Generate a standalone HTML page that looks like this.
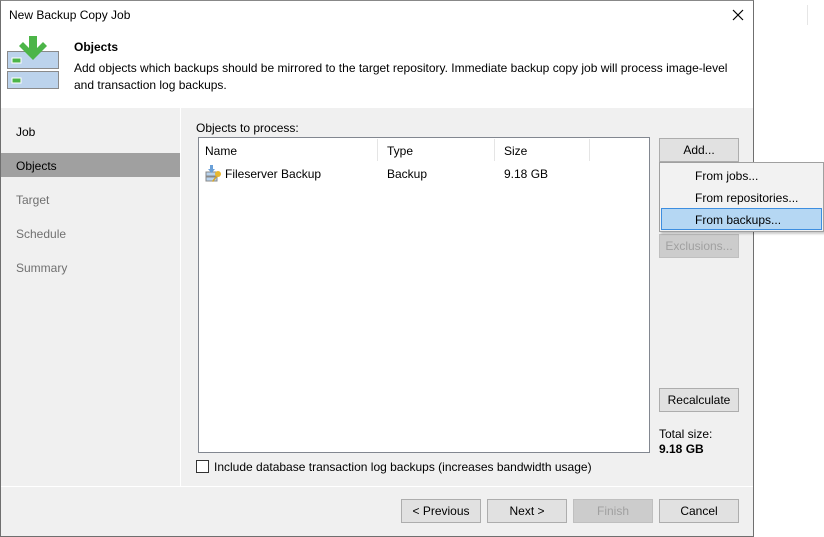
<!DOCTYPE html>
<html><head><style>
*{margin:0;padding:0;box-sizing:border-box}
body{width:824px;height:537px;background:#fff;font-family:"Liberation Sans",sans-serif;font-size:12px;color:#000;position:relative;overflow:hidden}
.a{position:absolute}
.btn{position:absolute;background:#e1e1e1;border:1px solid #adadad;text-align:center;line-height:22px;height:24px}
.dis{color:#a0a0a0;background:#cccccc;border-color:#bfbfbf}
</style></head><body>
<div class="a" style="left:0;top:0;width:754px;height:537px;border:1px solid #6f6f6f;border-top:1px solid #888;background:#f0f0f0"></div>
<div class="a" style="left:1px;top:1px;width:752px;height:107px;background:#fff"></div>
<div class="a" style="left:807px;top:5px;width:1px;height:20px;background:#e6e6e6"></div>
<div class="a" style="left:9px;top:8px;">New Backup Copy Job</div>
<svg class="a" style="left:732px;top:9px" width="12" height="12"><path d="M1 1L11 11M11 1L1 11" stroke="#000" stroke-width="1.2"/></svg>
<svg class="a" style="left:6px;top:36px" width="56" height="56">
<rect x="1.5" y="15.5" width="51" height="17" fill="#bcd3ec" stroke="#8a8a8a"/>
<rect x="1.5" y="35.5" width="51" height="17" fill="#bcd3ec" stroke="#8a8a8a"/>
<rect x="6" y="22" width="9" height="5" fill="#4cb548" stroke="#fff"/>
<rect x="6" y="42" width="9" height="5" fill="#4cb548" stroke="#fff"/>
<path d="M23 0h8v12l6-6 4 4-14 14-14-14 4-4 6 6z" fill="#4cb548"/>
</svg>
<div class="a" style="left:74px;top:40px;font-weight:bold">Objects</div>
<div class="a" style="left:74px;top:60px;line-height:17px;width:680px">Add objects which backups should be mirrored to the target repository. Immediate backup copy job will process image-level<br>and transaction log backups.</div>
<div class="a" style="left:180px;top:108px;width:1px;height:378px;background:#fff"></div>
<div class="a" style="left:1px;top:486px;width:752px;height:1px;background:#fff"></div>
<div class="a" style="left:16px;top:125px">Job</div>
<div class="a" style="left:1px;top:153px;width:179px;height:24px;background:#a0a0a0"></div>
<div class="a" style="left:16px;top:159px">Objects</div>
<div class="a" style="left:16px;top:193px;color:#707070">Target</div>
<div class="a" style="left:16px;top:227px;color:#707070">Schedule</div>
<div class="a" style="left:16px;top:261px;color:#707070">Summary</div>
<div class="a" style="left:196px;top:121px">Objects to process:</div>
<div class="a" style="left:198px;top:137px;width:452px;height:316px;background:#fff;border:1px solid #828790"></div>
<div class="a" style="left:377px;top:139px;width:1px;height:22px;background:#e5e5e5"></div>
<div class="a" style="left:494px;top:139px;width:1px;height:22px;background:#e5e5e5"></div>
<div class="a" style="left:589px;top:139px;width:1px;height:22px;background:#e5e5e5"></div>
<div class="a" style="left:205px;top:144px">Name</div>
<div class="a" style="left:387px;top:144px">Type</div>
<div class="a" style="left:504px;top:144px">Size</div>
<svg class="a" style="left:205px;top:165px" width="18" height="18"><rect x="1" y="7" width="11" height="4" fill="#b9d3ee" stroke="#888"/><rect x="1" y="12" width="11" height="4" fill="#b9d3ee" stroke="#888"/><path d="M5 0h3v4h2l-3.5 4-3.5-4h2z" fill="#6aa0d8"/><circle cx="13" cy="9" r="3" fill="#e8b830"/><path d="M11 11l-4 5 1 1 4-5z" fill="#d9a520"/></svg>
<div class="a" style="left:225px;top:167px">Fileserver Backup</div>
<div class="a" style="left:387px;top:167px">Backup</div>
<div class="a" style="left:504px;top:167px">9.18 GB</div>
<div class="btn" style="left:659px;top:138px;width:80px">Add...</div>
<div class="btn dis" style="left:659px;top:234px;width:80px">Exclusions...</div>
<div class="a" style="left:659px;top:162px;width:165px;height:70px;background:#f2f2f2;border:1px solid #a0a0a0;box-shadow:2px 2px 2px rgba(0,0,0,.2)"></div>
<div class="a" style="left:661px;top:208px;width:161px;height:22px;background:#b5d7f3;border:1px solid #3d8ee0"></div>
<div class="a" style="left:695px;top:169px">From jobs...</div>
<div class="a" style="left:695px;top:191px">From repositories...</div>
<div class="a" style="left:695px;top:213px">From backups...</div>
<div class="btn" style="left:659px;top:388px;width:80px">Recalculate</div>
<div class="a" style="left:659px;top:427px">Total size:</div>
<div class="a" style="left:659px;top:442px;font-weight:bold">9.18 GB</div>
<div class="a" style="left:196px;top:460px;width:13px;height:13px;background:#fff;border:1px solid #333"></div>
<div class="a" style="left:214px;top:460px">Include database transaction log backups (increases bandwidth usage)</div>
<div class="btn" style="left:401px;top:499px;width:80px">&lt; Previous</div>
<div class="btn" style="left:487px;top:499px;width:80px">Next &gt;</div>
<div class="btn dis" style="left:573px;top:499px;width:80px">Finish</div>
<div class="btn" style="left:659px;top:499px;width:80px">Cancel</div>
</body></html>
